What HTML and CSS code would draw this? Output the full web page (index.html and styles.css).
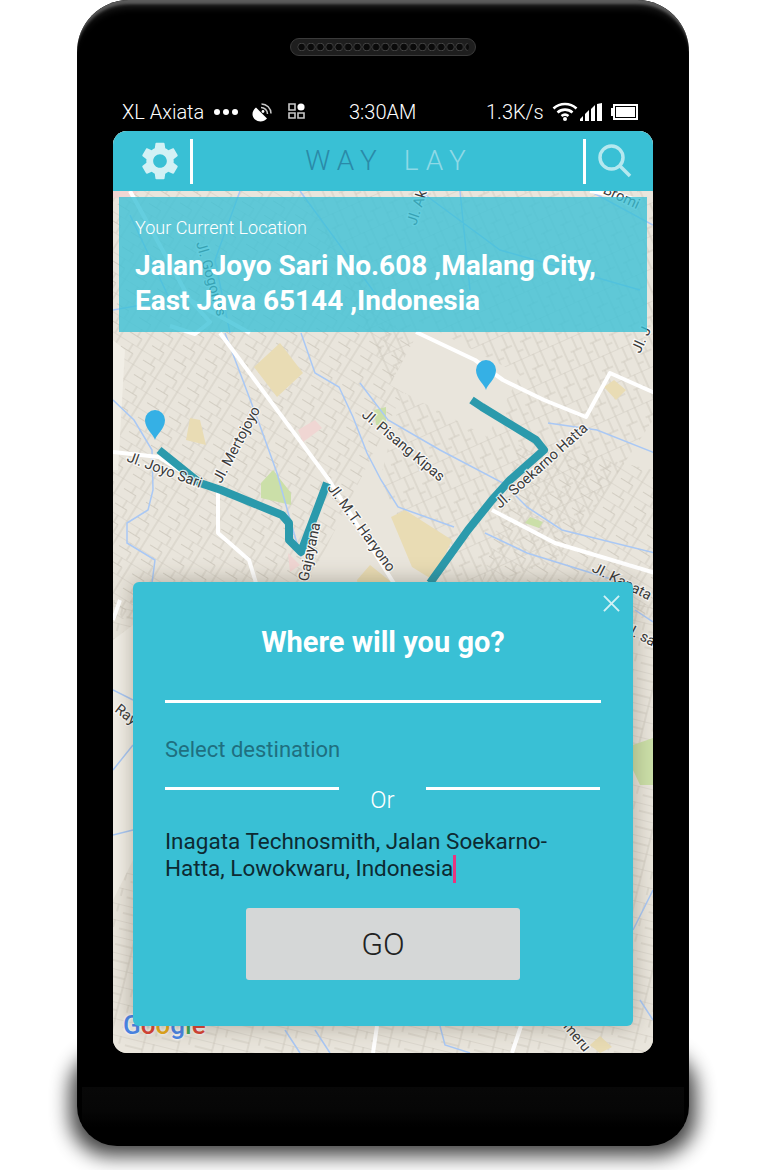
FILE: index.html
```html
<!DOCTYPE html>
<html lang="en">
<head>
<meta charset="utf-8">
<title>Way Lay</title>
<link rel="stylesheet" href="styles.css">
</head>
<body>
<div class="stage">
  <div class="drop-shadow"></div>
  <div class="phone">
    <div class="chin"></div>
    <div class="speaker"><span class="holes"></span></div>
    <div class="status">
      <span class="carrier">XL Axiata</span>
      <span class="dots"><i></i><i></i><i></i></span>
      <svg class="ic-dish" viewBox="0 0 20 20"><path class="s-fill" d="M4 4.5 15 15.500C12 19 6.500 19.500 3 16.500S-.5 8 4 4.500Z"/><circle class="s-fill" cx="11" cy="8.500" r="1.400"/><path class="s-stroke" d="M9 4.500a6.500 6.500 0 0 1 6.500 6.500M9.500 1a9.500 9.500 0 0 1 9.500 9.500"/></svg>
      <svg class="ic-grid" viewBox="0 0 17 16"><path class="g-stroke" d="M1 1h6v6H1zM1 10h6v5H1zM10 10h6v5h-6z"/><circle class="s-fill" cx="13" cy="4" r="3.600"/></svg>
      <span class="time">3:30AM</span>
      <span class="speed">1.3K/s</span>
      <svg class="ic-wifi" viewBox="0 0 26 19"><path class="w-stroke" d="M1.500 6.500C8 .5 18 .5 24.500 6.500M5.500 10.500c4.200-3.800 10.800-3.800 15 0M9.500 14c2-1.600 5-1.600 7 0"/><circle class="s-fill" cx="13" cy="17" r="2"/></svg>
      <svg class="ic-signal" viewBox="0 0 22 18"><path class="s-fill" d="M0 18v-2l3-3v5zM5 18V11l4-4v11zM11 18V6l4-4v16zM17 18V1l5-1v18z"/></svg>
      <svg class="ic-batt" viewBox="0 0 27 16"><path class="s-fill" d="M0 4h2v8H0z"/><rect class="b-stroke" x="3" y="1" width="23" height="14"/><rect class="s-fill" x="5" y="3" width="19" height="10"/></svg>
    </div>

    <div class="screen">
      <svg class="map" viewBox="113 131 540 922">
        <defs>
          <pattern id="st1" width="26" height="17" patternUnits="userSpaceOnUse" patternTransform="rotate(32)">
            <path class="street" d="M0 0H26M0 8.500H14M9 0V8.500M20 0V17M14 8.500V17"/>
          </pattern>
          <pattern id="st2" width="21" height="30" patternUnits="userSpaceOnUse" patternTransform="rotate(-24)">
            <path class="street" d="M0 0H21M0 14H12M7 0V14M15 0V30M3 14V30M15 22H21"/>
          </pattern>
          <pattern id="st3" width="34" height="16" patternUnits="userSpaceOnUse" patternTransform="rotate(14)">
            <path class="street" d="M0 0H34M0 8H18M18 0V16M28 0V8"/>
          </pattern>
        </defs>
        <rect class="land" x="113" y="131" width="540" height="922"/>
        <path class="blocks1" d="M113 191H300L420 360 300 600 113 620Z"/>
        <path class="blocks2" d="M300 191H653V420L560 560 440 600 380 480 400 400Z"/>
        <path class="blocks3" d="M113 600H653V1053H113Z"/>
        <path class="blocks1" d="M520 440 653 470V620L480 590Z"/>
        <rect class="clear" x="400" y="345" width="110" height="70" transform="rotate(28 455 380)"/>
        <path class="pale" d="M113 340 125 350 118 470 113 470ZM113 640 133 625V860L113 900Z"/>

        <path class="beige" d="M254 367 280 343 303 373 277 397ZM186 440 190 418 200 420 206 445ZM391 517 405 510 452 540 444 557 433 580 412 567ZM357 580 370 565 395 585 360 595ZM604 387 614 380 626 390 616 400ZM590 1045 600 1036 612 1047 600 1053Z"/>
        <path class="pink" d="M298 430 315 420 322 428 303 442ZM113 191H140L125 200 113 197ZM288 553 300 565 290 572Z"/>
        <path class="green" d="M261 483 273 470 291 493 291 505 261 498ZM374 410 386 407 386 425 376 425ZM525 523 530 517 543 522 539 528ZM633 745 653 738V785H640L633 770Z"/>

        <path class="water" d="M225 333 259 423 277 473 291 523 301 557M301 333 315 373 339 387 353 417 367 453 381 480 398 507 454 527M360 383 388 420 440 450 503 483 527 507 562 530 655 553M485 533 527 553 614 580M548 423 597 430 655 453M113 400 134 420 152 450 153 490 148 510 127 523 127 543 155 560 152 583M113 770 133 745M113 690 133 700M113 835 133 830M635 610 653 622M633 930 653 890M640 1000 653 1020M285 1030 300 1053M315 1030 330 1053M440 1026 445 1045 470 1053M240 191 215 260 230 333M300 191 380 300M420 191 500 250 640 290M590 191 653 225M460 191 470 290M130 215 170 300 113 310"/>

        <path class="road" d="M220 333 329 480 395 585M416 332 475 360 503 380 544 400 586 417 610 373 655 393M492 510 555 543 655 573M113 452 159 457 200 483M218 490V533L249 560 256 583M130 191 190 300 250 333M170 326 195 334 210 322 190 300M377 1026 373 1053M521 1026 512 1053M120 600 113 620M590 191 640 200"/>

        <path class="route" d="M159 450 200 483 221 490 282 515 289 523 289 540 301 552 327 483"/>
        <path class="route" d="M471.500 400 482 407 536 440 544 450 510 480 492 500 468 530 430 583"/>

        <text class="lbl" transform="translate(126 461) rotate(20)">Jl. Joyo Sari</text>
        <text class="lbl" transform="translate(221 484) rotate(-62)">Jl. Mertojoyo</text>
        <text class="lbl" transform="translate(361 416) rotate(40)">Jl. Pisang Kipas</text>
        <text class="lbl" transform="translate(500 509) rotate(-42)">Jl. Soekarno Hatta</text>
        <text class="lbl" transform="translate(327 488) rotate(54)">Jl. M.T. Haryono</text>
        <text class="lbl" transform="translate(308 582) rotate(-78)">Gajayana</text>
        <text class="lbl" transform="translate(196 243) rotate(74)">Jl. Gogonas</text>
        <text class="lbl" transform="translate(416 226) rotate(-72)">Jl. Ak</text>
        <text class="lbl" transform="translate(585 185) rotate(25)">Jl. Bromi</text>
        <text class="lbl" transform="translate(591 571) rotate(27)">Jl. Kapata</text>
        <text class="lbl" transform="translate(622 631) rotate(27)">Jl. sa R</text>
        <text class="lbl" transform="translate(114 711) rotate(38)">Raya</text>
        <text class="lbl" transform="translate(640 354) rotate(-65)">Jl. J</text>
        <text class="lbl" transform="translate(540 1000) rotate(50)">Jl. Semeru</text>

        <path class="pin" transform="translate(155 410)" d="M0 30C-1 25-10 19-10 10A10 10 0 1 1 10 10C10 19 1 25 0 30Z"/>
        <path class="pin" transform="translate(486 360)" d="M0 30C-1 25-10 19-10 10A10 10 0 1 1 10 10C10 19 1 25 0 30Z"/>
      </svg>

      <div class="google"><span class="g-b">G</span><span class="g-r">o</span><span class="g-y">o</span><span class="g-b">g</span><span class="g-g">l</span><span class="g-r">e</span></div>

      <header class="appbar">
        <svg class="ic-gear" viewBox="2 2 20 20"><path d="M19.140 12.940c.04-.3.06-.61.06-.94 0-.32-.02-.64-.07-.94l2.030-1.580c.18-.14.23-.41.12-.61l-1.920-3.320c-.12-.22-.37-.29-.59-.22l-2.390.96c-.5-.38-1.030-.7-1.620-.94L14.400 2.810c-.04-.24-.24-.41-.48-.41h-3.840c-.24 0-.43.17-.47.41L9.250 5.350c-.59.24-1.130.57-1.620.94L5.240 5.330c-.22-.08-.47 0-.59.22L2.740 8.870c-.12.21-.08.47.12.61l2.030 1.580c-.05.3-.09.63-.09.94s.02.64.07.94l-2.030 1.580c-.18.14-.23.41-.12.61l1.920 3.320c.12.22.37.29.59.22l2.390-.96c.5.38 1.030.7 1.620.94l.36 2.540c.05.24.24.41.48.41h3.840c.24 0 .44-.17.47-.41l.36-2.540c.59-.24 1.130-.56 1.620-.94l2.390.96c.22.08.47 0 .59-.22l1.920-3.320c.12-.22.07-.47-.12-.61l-2.010-1.580zM12 15.600c-1.980 0-3.600-1.620-3.600-3.600s1.620-3.600 3.600-3.600 3.600 1.620 3.600 3.600-1.620 3.600-3.600 3.600z"/></svg>
        <span class="vline"></span>
        <h1 class="brand"><span class="brand-a">WAY</span> <span class="brand-b">LAY</span></h1>
        <span class="vline"></span>
        <svg class="ic-search" viewBox="0 0 34 34"><circle cx="13.500" cy="13.500" r="11.500"/><path d="M22 22 32 32"/></svg>
      </header>

      <section class="location">
        <p class="loc-label">Your Current Location</p>
        <p class="loc-addr">Jalan Joyo Sari No.608 ,Malang City, East Java 65144 ,Indonesia</p>
      </section>

      <section class="dialog">
        <svg class="ic-close" viewBox="0 0 18 18"><path d="M1 1 17 17M17 1 1 17"/></svg>
        <h2 class="d-title">Where will you go?</h2>
        <div class="d-rule"></div>
        <p class="d-select">Select destination</p>
        <div class="d-or"><span class="d-line"></span><span class="d-or-text">Or</span><span class="d-line"></span></div>
        <p class="d-input">Inagata Technosmith, Jalan Soekarno-Hatta, Lowokwaru, Indonesia<span class="caret"></span></p>
        <button class="d-go">GO</button>
      </section>
    </div>
  </div>
</div>
</body>
</html>
```

FILE: styles.css
```css
* { box-sizing: border-box; }
html, body { margin: 0; padding: 0; background: #fff; }
body { font-family: Roboto, "Liberation Sans", sans-serif; }
p, h1, h2 { margin: 0; font-weight: inherit; }

.stage { position: relative; width: 765px; height: 1170px; overflow: hidden; padding-left: 77px; }

.drop-shadow {
  position: absolute; left: 70px; top: 1050px; width: 626px; height: 106px;
  border-radius: 40px; background: #000; opacity: .75; filter: blur(10px);
}

.phone {
  position: relative; width: 612px; height: 1146px;
  border-radius: 52px 52px 40px 40px;
  background: #000;
  box-shadow: inset 0 6px 3px -2px #5c5c5c, inset 0 14px 8px -8px #2a2a2a;
  padding: 38px 36px 0;
  overflow: hidden;
}
.chin { position: absolute; left: 5px; right: 5px; top: 1087px; height: 40px; background: linear-gradient(#080808, #060606 60%, #000); }

.speaker {
  width: 186px; height: 18px; margin: 0 auto; border-radius: 9px;
  background: #1e1e1e; border: 1px solid #3a3a3a; padding: 3px 6px;
}
.holes {
  display: block; height: 10px; border-radius: 5px;
  background: radial-gradient(circle at center, #0a0a0a 3px, #4a4a4a 3.800px, #1e1e1e 4.500px) 0 0 / 9.300px 10px repeat-x;
}

.status { display: flex; align-items: center; height: 26px; margin-top: 43px; padding-left: 9px; color: #fff; font-weight: 300; font-size: 20px; white-space: nowrap; }
.carrier { width: 92px; }
.dots { display: flex; gap: 3px; width: 38px; }
.dots i { width: 6px; height: 6px; border-radius: 50%; background: #fff; }
.ic-dish { width: 20px; height: 20px; margin-top: 2px; }
.ic-grid { width: 17px; height: 16px; margin-left: 16px; margin-top: -3px; }
.s-fill { fill: #fff; }
.s-stroke { fill: none; stroke: #c8c8c8; stroke-width: 1.500; }
.g-stroke { fill: none; stroke: #c8c8c8; stroke-width: 1.600; }
.w-stroke { fill: none; stroke: #fff; stroke-width: 2.600; }
.b-stroke { fill: none; stroke: #fff; stroke-width: 2; }
.time { margin-left: 44px; width: 137px; }
.speed { width: 66px; }
.ic-wifi { width: 26px; height: 19px; margin-top: -2px; }
.ic-signal { width: 22px; height: 18px; margin-left: 2px; margin-top: -1px; }
.ic-batt { width: 27px; height: 16px; margin-left: 9px; margin-top: -1px; }

.screen { position: relative; height: 922px; margin-top: 6px; border-radius: 14px; overflow: hidden; background: #e9e5dc; }
.map { position: absolute; left: 0; top: 0; width: 540px; height: 922px; display: block; }
.land { fill: #e9e5dc; }
.blocks1 { fill: url(#st1); }
.blocks2 { fill: url(#st2); }
.blocks3 { fill: url(#st3); }
.clear { fill: #e9e5dc; }
.pale { fill: #f1eee6; }
.street { fill: none; stroke: #cbc7bb; stroke-width: .8; }
.beige { fill: #e9dcb4; }
.pink { fill: #f0d6d3; }
.green { fill: #cbdfa8; }
.water { fill: none; stroke: #a9c8f5; stroke-width: 1.500; }
.road { fill: none; stroke: #fff; stroke-width: 4; stroke-linejoin: round; }
.route { fill: none; stroke: #2b9aac; stroke-width: 8; stroke-linejoin: round; }
.lbl { font-family: Roboto, sans-serif; font-size: 14.500px; fill: #3a3a3a; stroke: rgba(255,255,255,.75); stroke-width: 2.500px; paint-order: stroke; }
.pin { fill: #35b0e5; }

.google { position: absolute; left: 10px; top: 878px; font-size: 26px; font-weight: 500; line-height: 32px; text-shadow: 0 0 3px #fff, 0 0 3px #fff; }
.g-b { color: #4a86e8; }
.g-r { color: #db4437; }
.g-y { color: #e8ab1c; }
.g-g { color: #3aa757; }

.appbar { position: relative; display: flex; align-items: center; height: 60px; background: #39c0d5; padding-left: 28px; padding-right: 21px; }
.ic-gear { width: 38px; height: 38px; fill: #d3f1f5; }
.vline { width: 3px; height: 45px; background: #fff; flex: none; }
.appbar .vline:nth-of-type(1) { margin-left: 11px; }
.brand { flex: 1; text-align: center; font-size: 28px; font-weight: 300; letter-spacing: 7px; line-height: 1; padding-left: 2px; }
.brand-a { color: #2a8aa8; }
.brand-b { color: #8fd9e6; margin-left: 6px; }
.ic-search { width: 34px; height: 34px; margin-left: 12px; fill: none; stroke: #b5e8ef; stroke-width: 3.500; }

.location { position: relative; height: 135px; margin: 6px 6px 0; padding: 19px 16px 0; background: rgba(57,192,214,.78); color: #fff; }
.loc-label { font-size: 18px; font-weight: 300; line-height: 24px; }
.loc-addr { margin-top: 8px; font-size: 28px; font-weight: 700; line-height: 35px; }

.dialog {
  position: absolute; left: 20px; top: 451px; width: 500px; height: 444px;
  background: #39c0d5; border-radius: 6px; padding: 42px 32px 0;
  box-shadow: 0 0 22px rgba(60,50,30,.35);
}
.ic-close { position: absolute; right: 13px; top: 13px; width: 17px; height: 17px; fill: none; stroke: #d3f1f5; stroke-width: 2; }
.d-title { color: #fff; font-size: 29px; font-weight: 700; line-height: 36px; text-align: center; margin-right: 0; }
.d-rule { height: 3px; width: 436px; background: #fff; margin-top: 40px; }
.d-select { margin-top: 33px; font-size: 22px; line-height: 28px; font-weight: 400; color: #1f6f80; }
.d-or { display: flex; align-items: flex-start; margin-top: 23px; height: 30px; }
.d-line { width: 174px; height: 3px; background: #fff; }
.d-or-text { width: 87px; text-align: center; color: #fff; font-size: 24px; font-weight: 300; line-height: 28px; margin-top: -1px; }
.d-input { margin-top: 11px; font-size: 22.500px; line-height: 27px; font-weight: 400; color: #0d2a32; width: 436px; }
.caret { display: inline-block; width: 3px; height: 28px; background: #e9357f; vertical-align: -7px; }
.d-go { display: block; width: 274px; height: 72px; margin: 25px auto 0; border: 0; border-radius: 3px; background: #d5d7d7; color: #222; font-family: Roboto, sans-serif; font-size: 32px; font-weight: 300; }
```
